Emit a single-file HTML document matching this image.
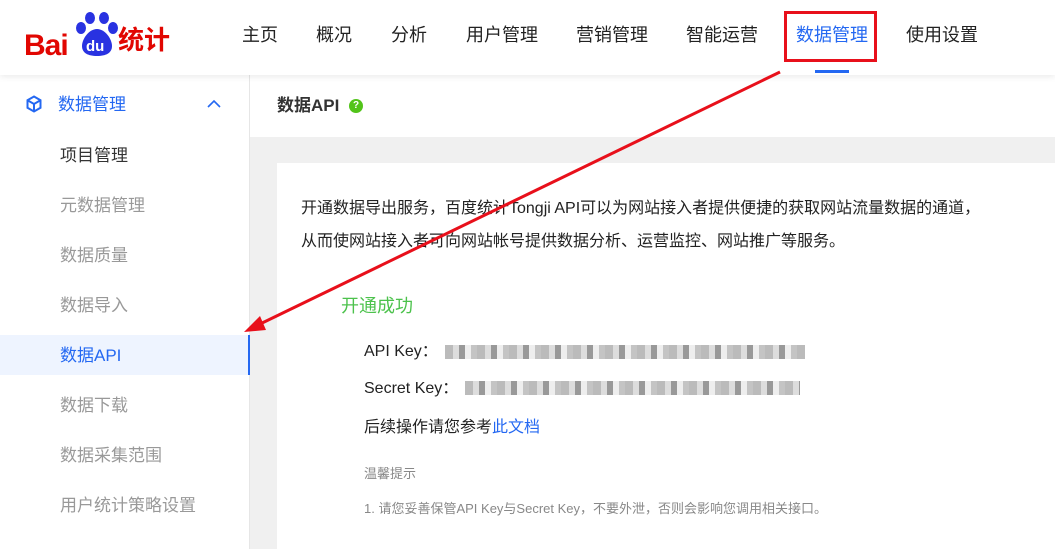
<!DOCTYPE html><html><head><meta charset="utf-8"><style>
*{margin:0;padding:0;box-sizing:border-box}
html,body{width:1055px;height:549px;overflow:hidden}
body{position:relative;background:#f0f0f0;font-family:"Liberation Sans","Noto Sans CJK SC",sans-serif;color:#333;line-height:1}
.hd{position:absolute;left:0;top:0;width:1055px;height:75px;background:#fff;box-shadow:0 2px 6px rgba(0,0,0,.08);z-index:2}
.nav{position:absolute;top:26px;font-size:18px;color:#222}
.sb{position:absolute;left:0;top:75px;width:250px;height:474px;background:#fff;border-right:1px solid #e6e6e6}
.si{position:absolute;left:60px;font-size:17px;color:#999}
.t{position:absolute;left:250px;top:75px;width:805px;height:62px;background:#fff}
.card{position:absolute;left:277px;top:163px;width:778px;height:386px;background:#fff}
.p{position:absolute;font-size:16px;color:#222;white-space:nowrap}
.blur{position:absolute;height:14px;background:repeating-linear-gradient(90deg,#bbb 0 8px,#ddd 8px 14px,#999 14px 20px,#eee 20px 26px,#c4c4c4 26px 32px)}
</style></head><body>
<div class="hd">
<div style="position:absolute;left:24px;top:29px;font:bold 30px 'Liberation Sans',sans-serif;color:#e10601;letter-spacing:-1px">Bai</div>
<svg style="position:absolute;left:75px;top:11px" width="44" height="47" viewBox="0 0 44 47"><g fill="#2932e1"><ellipse cx="6" cy="17" rx="5" ry="6"/><ellipse cx="15" cy="7" rx="5" ry="6"/><ellipse cx="29" cy="7" rx="5" ry="6"/><ellipse cx="38" cy="17" rx="5" ry="6"/><path d="M22 18c-8 0-15 10-15 17 0 7 6 10 15 10s15-3 15-10c0-7-7-17-15-17z"/></g><text x="11" y="40" font-size="15" font-weight="bold" fill="#fff" font-family="Liberation Sans">du</text></svg>
<div style="position:absolute;left:118px;top:27px;font-size:26px;font-weight:bold;color:#e10601">统计</div>
<div class="nav" style="left:242px">主页</div><div class="nav" style="left:316px">概况</div><div class="nav" style="left:391px">分析</div><div class="nav" style="left:466px">用户管理</div><div class="nav" style="left:576px">营销管理</div><div class="nav" style="left:686px">智能运营</div><div class="nav" style="left:796px;color:#2468f2">数据管理</div><div class="nav" style="left:906px">使用设置</div>
<div style="position:absolute;left:784px;top:11px;width:93px;height:51px;border:3px solid #e8101b"></div>
<div style="position:absolute;left:815px;top:70px;width:34px;height:3px;background:#2468f2"></div>
</div>
<div class="sb">
<svg style="position:absolute;left:25px;top:20px" width="18" height="18" viewBox="0 0 18 18" fill="none" stroke="#2468f2" stroke-width="2"><path d="M9 1.5l6.5 3.75v7.5L9 16.5l-6.5-3.75v-7.5z M2.5 5.25L9 9l6.5-3.75 M9 9v7.5"/></svg>
<div style="position:absolute;left:58px;top:21px;font-size:17px;color:#2468f2">数据管理</div>
<svg style="position:absolute;left:206px;top:24px" width="16" height="10"><path d="M2 8l6-6 6 6" stroke="#2468f2" stroke-width="1.6" fill="none"/></svg>
<div class="si" style="top:72px;color:#333">项目管理</div>
<div class="si" style="top:122px">元数据管理</div>
<div class="si" style="top:172px">数据质量</div>
<div class="si" style="top:222px">数据导入</div>
<div style="position:absolute;left:0;top:260px;width:250px;height:40px;background:#eef4ff;border-right:2px solid #2468f2"></div>
<div class="si" style="top:272px;color:#2468f2">数据API</div>
<div class="si" style="top:322px">数据下载</div>
<div class="si" style="top:372px">数据采集范围</div>
<div class="si" style="top:422px">用户统计策略设置</div>
</div>
<div class="t"><div style="position:absolute;left:27px;top:22px;font-size:17px;font-weight:bold;color:#333">数据API</div><div style="position:absolute;left:99px;top:24px;width:14px;height:14px;border-radius:50%;background:#52c41a;color:#fff;font-size:10px;text-align:center;line-height:14px;font-weight:bold">?</div></div>
<div class="card">
<div class="p" style="left:24px;top:38px">开通数据导出服务，百度统计Tongji API可以为网站接入者提供便捷的获取网站流量数据的通道，</div>
<div class="p" style="left:24px;top:71px">从而使网站接入者可向网站帐号提供数据分析、运营监控、网站推广等服务。</div>
<div class="p" style="left:64px;top:134px;font-size:18px;color:#4cc24c">开通成功</div>
<div class="p" style="left:87px;top:181px">API Key：</div>
<div class="p" style="left:87px;top:218px">Secret Key：</div>
<div class="p" style="left:87px;top:257px">后续操作请您参考<span style="color:#2468f2">此文档</span></div>
<div class="p" style="left:87px;top:304px;font-size:13px;color:#888">温馨提示</div>
<div class="p" style="left:87px;top:339px;font-size:13px;color:#888">1. 请您妥善保管API Key与Secret Key，不要外泄，否则会影响您调用相关接口。</div>
</div>
<div class="blur" style="left:445px;top:345px;width:360px"></div>
<div class="blur" style="left:465px;top:381px;width:335px"></div>
<svg style="position:absolute;left:0;top:0;z-index:3" width="1055" height="549"><line x1="780" y1="72" x2="258" y2="325" stroke="#e8101b" stroke-width="3"/><path d="M244 332l16-16 6 14z" fill="#e8101b"/></svg>
</body></html>
